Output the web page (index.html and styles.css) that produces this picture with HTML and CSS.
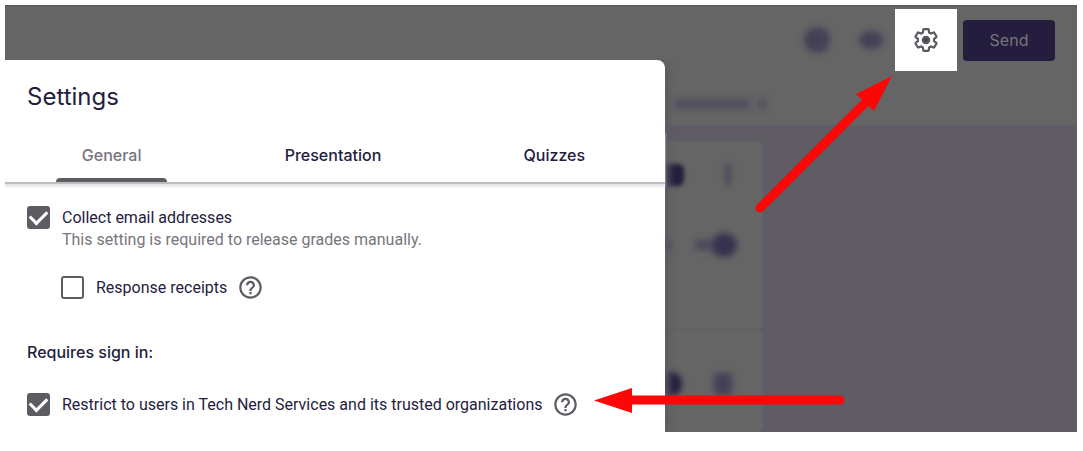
FILE: index.html
```html
<!DOCTYPE html>
<html lang="en">
<head>
<meta charset="utf-8">
<title>Settings</title>
<link rel="stylesheet" href="styles.css">
</head>
<body>
<main class="stage">
  <div class="backdrop">
    <header class="toolbar">
      <span class="smudge smudge-round"></span>
      <span class="smudge smudge-eye"></span>
      <button class="gear" type="button" aria-label="Settings">
        <svg viewBox="0 0 24 24" aria-hidden="true"><path d="M19.43 12.98c.04-.32.07-.64.07-.98 0-.34-.03-.66-.07-.98l2.11-1.65c.19-.15.24-.42.12-.64l-2-3.46c-.09-.16-.26-.25-.44-.25-.06 0-.12.01-.17.03l-2.49 1c-.52-.4-1.08-.73-1.69-.98l-.38-2.65C14.46 2.18 14.25 2 14 2h-4c-.25 0-.46.18-.49.42l-.38 2.65c-.61.25-1.17.59-1.69.98l-2.49-1c-.06-.02-.12-.03-.18-.03-.17 0-.34.09-.43.25l-2 3.46c-.13.22-.07.49.12.64l2.11 1.65c-.04.32-.07.65-.07.98 0 .33.03.66.07.98l-2.11 1.65c-.19.15-.24.42-.12.64l2 3.46c.09.16.26.25.44.25.06 0 .12-.01.17-.03l2.49-1c.52.4 1.08.73 1.69.98l.38 2.65c.03.24.24.42.49.42h4c.25 0 .46-.18.49-.42l.38-2.65c.61-.25 1.17-.59 1.69-.98l2.49 1c.06.02.12.03.18.03.17 0 .34-.09.43-.25l2-3.46c.12-.22.07-.49-.12-.64l-2.11-1.65z"/><circle cx="12" cy="12" r="3"/></svg>
      </button>
      <button class="send" type="button">Send</button>
    </header>
    <div class="status">
      <span class="smudge smudge-line"></span>
      <span class="smudge smudge-end"></span>
    </div>
    <div class="canvas">
      <div class="card">
        <div class="card-row">
          <span class="smudge smudge-block"></span>
          <span class="smudge smudge-bar"></span>
        </div>
        <div class="card-row">
          <span class="smudge smudge-dot"></span>
          <span class="smudge smudge-tail"></span>
          <span class="smudge smudge-knob"></span>
        </div>
      </div>
      <div class="card card-last">
        <div class="card-row">
          <span class="smudge smudge-ball"></span>
          <span class="smudge smudge-square"></span>
        </div>
      </div>
    </div>
  </div>

  <section class="dialog" role="dialog" aria-labelledby="title">
    <h1 class="title" id="title">Settings</h1>
    <div class="tabs" role="tablist">
      <button class="tab tab-active" type="button" role="tab" aria-selected="true">General</button>
      <button class="tab" type="button" role="tab" aria-selected="false">Presentation</button>
      <button class="tab" type="button" role="tab" aria-selected="false">Quizzes</button>
    </div>
    <div class="options">
      <div class="option">
        <input class="check" type="checkbox" id="collect" checked>
        <label for="collect">Collect email addresses</label>
      </div>
      <p class="hint">This setting is required to release grades manually.</p>
      <div class="option option-nested">
        <input class="check" type="checkbox" id="receipts">
        <label for="receipts">Response receipts</label>
        <button class="help" type="button" aria-label="About response receipts">
          <svg viewBox="0 0 24 24" aria-hidden="true"><path d="M11 18h2v-2h-2v2zm1-16C6.48 2 2 6.48 2 12s4.48 10 10 10 10-4.48 10-10S17.52 2 12 2zm0 18c-4.41 0-8-3.59-8-8s3.59-8 8-8 8 3.59 8 8-3.59 8-8 8zm0-14c-2.21 0-4 1.79-4 4h2c0-1.1.9-2 2-2s2 .9 2 2c0 2-3 1.75-3 5h2c0-2.25 3-2.5 3-5 0-2.21-1.79-4-4-4z"/></svg>
        </button>
      </div>
      <h2 class="group">Requires sign in:</h2>
      <div class="option">
        <input class="check" type="checkbox" id="restrict" checked>
        <label for="restrict">Restrict to users in Tech Nerd Services and its trusted organizations</label>
        <button class="help" type="button" aria-label="About restricting users">
          <svg viewBox="0 0 24 24" aria-hidden="true"><path d="M11 18h2v-2h-2v2zm1-16C6.48 2 2 6.48 2 12s4.48 10 10 10 10-4.48 10-10S17.52 2 12 2zm0 18c-4.41 0-8-3.59-8-8s3.59-8 8-8 8 3.59 8 8-3.59 8-8 8zm0-14c-2.21 0-4 1.79-4 4h2c0-1.1.9-2 2-2s2 .9 2 2c0 2-3 1.75-3 5h2c0-2.25 3-2.5 3-5 0-2.21-1.79-4-4-4z"/></svg>
        </button>
      </div>
    </div>
  </section>

  <svg class="arrows" viewBox="0 0 1072 427" aria-hidden="true">
    <path class="shaft" d="M755 203L863 95M835 395H620"/>
    <path class="head" d="M887 71L851 89L869 106zM589 395.500L627 383V408z"/>
  </svg>
</main>
</body>
</html>
```
FILE: styles.css
```css
* {
  box-sizing: border-box;
}

body {
  margin: 0;
  padding: 5px 6px 18px 5px;
  background: #fff;
  color: #241d3d;
  font-family: Roboto, "Liberation Sans", sans-serif;
  font-size: 16px;
}

button {
  border: 0;
  padding: 0;
  background: none;
  color: inherit;
  font-family: inherit;
}

/* The dimmed page and the dialog share one grid cell. */
.stage {
  position: relative;
  display: grid;
}

.backdrop,
.dialog {
  grid-area: 1 / 1;
}

.backdrop {
  display: flex;
  flex-direction: column;
  overflow: hidden;
  background: #656565;
  border-top: 2px solid #5e5b63;
}

.toolbar {
  display: flex;
  justify-content: flex-end;
  align-items: center;
  height: 66px;
  padding-right: 22px;
}

.gear {
  display: grid;
  place-items: center;
  width: 62px;
  height: 62px;
  margin-right: 6px;
  background: #fff;
}

.gear svg {
  width: 26px;
  height: 26px;
  fill: none;
  stroke: #5b5860;
  stroke-width: 2;
}

.gear circle {
  fill: #4b4755;
}

.send {
  width: 92px;
  height: 41px;
  border-radius: 4px;
  background: #241d3d;
  color: #77747c;
  font-family: Inter, sans-serif;
  font-size: 16px;
}

.smudge {
  flex: none;
  background: #454056;
  filter: blur(3px);
}

.smudge-round {
  width: 26px;
  height: 26px;
  margin-right: 29px;
  border-radius: 50%;
}

.smudge-eye {
  width: 24px;
  height: 18px;
  margin-right: 12px;
  border-radius: 50%;
}

.status {
  display: flex;
  justify-content: flex-end;
  align-items: center;
  gap: 8px;
  width: 71%;
  height: 52px;
  padding-top: 10px;
}

.smudge-line {
  width: 76px;
  height: 10px;
  background: #524e5c;
}

.smudge-end {
  width: 8px;
  height: 10px;
  background: #524e5c;
}

.canvas {
  display: flex;
  flex: 1;
  flex-direction: column;
  gap: 1px;
  padding-top: 16px;
  background: #5f5c63;
}

.card {
  display: flex;
  flex-direction: column;
  gap: 38px;
  width: 70.7%;
  height: 188px;
  padding-top: 18px;
  border-radius: 0 6px 6px 0;
  background: #656565;
}

.card-last {
  flex: 1;
  height: auto;
  padding-top: 38px;
}

.card-row {
  display: flex;
  justify-content: flex-end;
  align-items: center;
  height: 32px;
  padding-right: 26px;
}

.smudge-block {
  width: 30px;
  height: 22px;
  margin-right: 41px;
  border-radius: 6px;
  background: #241d3d;
  filter: blur(2px);
}

.smudge-bar {
  width: 6px;
  height: 20px;
  margin-right: 6px;
  background: #4c475a;
}

.smudge-dot {
  width: 16px;
  height: 9px;
  margin-right: 24px;
}

.smudge-tail {
  width: 16px;
  height: 10px;
  background: #4c475a;
}

.smudge-knob {
  width: 26px;
  height: 24px;
  border-radius: 50%;
  background: #383250;
}

.smudge-ball {
  width: 24px;
  height: 24px;
  margin-right: 32px;
  border-radius: 50%;
  background: #241d3d;
}

.smudge-square {
  width: 18px;
  height: 22px;
  margin-right: 5px;
  border-radius: 4px;
}

.dialog {
  align-self: end;
  width: 62%;
  max-width: 660px;
  margin-top: 55px;
  border-radius: 0 8px 0 0;
  background: #fff;
  box-shadow: 4px 0 8px #5e5a63;
  clip-path: inset(0 -16px 0 0);
}

.title {
  margin: 0 0 16px;
  padding: 20px 22px 0;
  font-family: Inter, sans-serif;
  font-size: 24px;
  font-weight: 400;
  line-height: 34px;
}

.tabs {
  display: flex;
  height: 54px;
  margin-left: -4px;
  border-bottom: 2px solid #bdbdbf;
  box-shadow: 0 3px 2px #e6e6ea;
}

.tab {
  display: flex;
  flex: 1;
  flex-direction: column;
  align-items: center;
  justify-content: space-between;
  padding-top: 15px;
  font-family: Inter, sans-serif;
  font-size: 16px;
  font-weight: 500;
  line-height: 20px;
}

.tab-active {
  color: #77757d;
}

.tab-active::after {
  width: 50%;
  height: 4px;
  border-radius: 4px 4px 0 0;
  background: #5e5b63;
  content: "";
}

.options {
  padding: 21px 22px 16px;
}

.option {
  display: flex;
  align-items: center;
  gap: 12px;
  height: 24px;
}

.option-nested {
  margin-top: 24px;
  padding-left: 34px;
}

.check {
  display: grid;
  place-items: center;
  width: 23px;
  height: 23px;
  margin: 0;
  border: 2px solid #5e5b63;
  border-radius: 3px;
  appearance: none;
}

.check:checked {
  background: #5e5b63;
}

.check:checked::before {
  width: 14px;
  height: 8px;
  margin-bottom: 4px;
  border: solid #fff;
  border-width: 0 0 3px 3px;
  transform: rotate(-45deg);
  content: "";
}

.help {
  width: 27px;
  height: 27px;
  margin-left: -2px;
}

.help svg {
  display: block;
  fill: #5e5b63;
}

.hint {
  margin: 0;
  padding-left: 35px;
  color: #77757d;
  line-height: 22px;
}

.group {
  margin: 41px 0 28px;
  font-family: Inter, sans-serif;
  font-size: 16px;
  font-weight: 500;
  line-height: 24px;
}

.arrows {
  position: absolute;
  inset: 0;
  width: 100%;
  pointer-events: none;
}

.shaft {
  fill: none;
  stroke: #fb0707;
  stroke-width: 9;
  stroke-linecap: round;
}

.head {
  fill: #fb0707;
}
```
